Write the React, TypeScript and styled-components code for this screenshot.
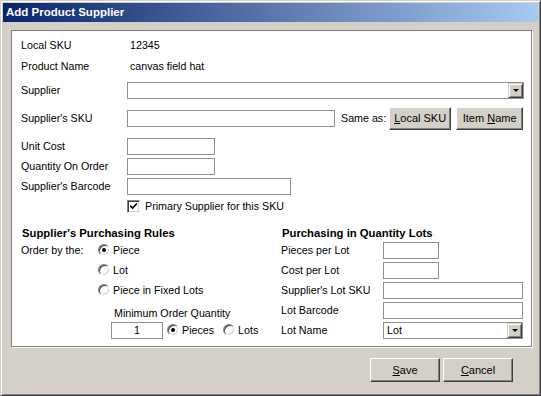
import styled, { createGlobalStyle } from "styled-components";

const GlobalStyle = createGlobalStyle`
  html, body {
    margin: 0;
    padding: 0;
    background: #d4d0c8;
  }
  body {
    font-family: "Liberation Sans", Arial, sans-serif;
    font-size: 10.7px;
    color: #000;
  }
`;

const Window = styled.div`
  width: 541px;
  height: 396px;
  box-sizing: border-box;
  background: #d4d0c8;
  border: 1px solid;
  border-color: #d4d0c8 #404040 #404040 #d4d0c8;
  box-shadow: inset 1px 1px #fff, inset -1px -1px #808080;
  padding: 2px;
  display: flex;
  flex-direction: column;
`;

const TitleBar = styled.div`
  height: 19px;
  flex: none;
  background: linear-gradient(to right, #0a246a, #a6caf0);
  color: #fff;
  font-weight: bold;
  font-size: 11.5px;
  line-height: 19px;
  padding-left: 3px;
`;

const Panel = styled.div`
  width: 521px;
  height: 317px;
  box-sizing: border-box;
  margin: 8px 0 0 8px;
  background: #fff;
  border: 1px solid #808080;
  box-shadow: 1px 1px 0 #fff;
  padding-left: 9px;
  display: flex;
  flex-direction: column;
`;

const Row = styled.div<{ $h?: number; $mt?: number }>`
  display: flex;
  align-items: center;
  height: ${(p) => p.$h ?? 20}px;
  margin-top: ${(p) => p.$mt ?? 0}px;
  white-space: nowrap;
`;

const Label = styled.span<{ $w?: number }>`
  flex: none;
  width: ${(p) => p.$w ?? 106}px;
`;

const Value = styled.span`
  padding-left: 3px;
`;

const TextBox = styled.input<{ $w: number; $center?: boolean }>`
  flex: none;
  width: ${(p) => p.$w}px;
  height: 17px;
  box-sizing: border-box;
  border: 1px solid #8f8f8f;
  margin: 0;
  padding: 0 3px;
  font: inherit;
  text-align: ${(p) => (p.$center ? "center" : "left")};
  background: #fff;
  outline: none;
`;

const SelectBox = styled.div<{ $w: number }>`
  flex: none;
  width: ${(p) => p.$w}px;
  height: 17px;
  box-sizing: border-box;
  border: 1px solid #8f8f8f;
  display: flex;
  align-items: center;
  justify-content: space-between;
  padding-left: 3px;
`;

const DropButton = styled.span`
  width: 15px;
  height: 15px;
  box-sizing: border-box;
  background: #d4d0c8;
  border: 1px solid;
  border-color: #d4d0c8 #404040 #404040 #d4d0c8;
  box-shadow: inset 1px 1px #fff, inset -1px -1px #808080;
  display: flex;
  align-items: center;
  justify-content: center;

  &::after {
    content: "";
    border-left: 3px solid transparent;
    border-right: 3px solid transparent;
    border-top: 3px solid #000;
  }
`;

const Button = styled.button<{ $w: number; $h?: number; $ml?: number }>`
  flex: none;
  width: ${(p) => p.$w}px;
  height: ${(p) => p.$h ?? 23}px;
  margin-left: ${(p) => p.$ml ?? 0}px;
  box-sizing: border-box;
  background: #d4d0c8;
  border: 1px solid;
  border-color: #fff #404040 #404040 #fff;
  box-shadow: inset -1px -1px #808080;
  font: inherit;
  font-size: 11px;
  color: #000;
  padding: 0;

  u {
    text-decoration: underline;
  }
`;

const SameAs = styled.span`
  margin-left: 6px;
`;

const Check = styled.span`
  flex: none;
  width: 13px;
  height: 13px;
  box-sizing: border-box;
  background: #fff;
  border: 1px solid;
  border-color: #808080 #fff #fff #808080;
  box-shadow: inset 1px 1px #404040, inset -1px -1px #d4d0c8;
  display: flex;
  align-items: center;
  justify-content: center;
`;

const CheckText = styled.span`
  margin-left: 5px;
`;

const Columns = styled.div`
  display: grid;
  grid-template-columns: 260px 1fr;
  margin-top: 10px;
`;

const Col = styled.div`
  display: flex;
  flex-direction: column;
`;

const Heading = styled.div`
  height: 14px;
  line-height: 14px;
  font-weight: bold;
  font-size: 11.3px;
  padding-left: 1px;
`;

const Indent = styled.span<{ $w: number }>`
  flex: none;
  width: ${(p) => p.$w}px;
`;

const RadioItem = styled.span<{ $ml?: number }>`
  display: inline-flex;
  align-items: center;
  gap: 3px;
  margin-left: ${(p) => p.$ml ?? 0}px;
`;

const RadioDot = styled.span<{ $on?: boolean }>`
  flex: none;
  width: 12px;
  height: 12px;
  box-sizing: border-box;
  border-radius: 50%;
  background: #fff;
  border: 1px solid;
  border-color: #808080 #fff #fff #808080;
  box-shadow: inset 1px 1px #404040, inset -1px -1px #d4d0c8;
  display: flex;
  align-items: center;
  justify-content: center;

  &::after {
    content: "";
    width: 4px;
    height: 4px;
    border-radius: 50%;
    background: ${(p) => (p.$on ? "#000" : "transparent")};
  }
`;

const Footer = styled.div`
  display: flex;
  justify-content: flex-end;
  gap: 3px;
  margin-top: 11px;
  padding-right: 25px;
`;

const Radio = ({ on, label, ml }: { on?: boolean; label: string; ml?: number }) => (
  <RadioItem $ml={ml}>
    <RadioDot $on={on} />
    {label}
  </RadioItem>
);

const Select = ({ w, value }: { w: number; value?: string }) => (
  <SelectBox $w={w}>
    <span>{value}</span>
    <DropButton />
  </SelectBox>
);

export default function App() {
  return (
    <>
      <GlobalStyle />
      <Window>
        <TitleBar>Add Product Supplier</TitleBar>
        <Panel>
          <Row $mt={4}>
            <Label>Local SKU</Label>
            <Value>12345</Value>
          </Row>
          <Row $mt={1}>
            <Label>Product Name</Label>
            <Value>canvas field hat</Value>
          </Row>
          <Row $mt={4}>
            <Label>Supplier</Label>
            <Select w={397} />
          </Row>
          <Row $h={24} $mt={6}>
            <Label>Supplier's SKU</Label>
            <TextBox $w={208} readOnly />
            <SameAs>Same as:</SameAs>
            <Button $w={62} $ml={3}>
              <u>L</u>ocal SKU
            </Button>
            <Button $w={67} $ml={5}>
              Item <u>N</u>ame
            </Button>
          </Row>
          <Row $mt={6}>
            <Label>Unit Cost</Label>
            <TextBox $w={88} readOnly />
          </Row>
          <Row>
            <Label>Quantity On Order</Label>
            <TextBox $w={88} readOnly />
          </Row>
          <Row>
            <Label>Supplier's Barcode</Label>
            <TextBox $w={164} readOnly />
          </Row>
          <Row>
            <Label />
            <Check>
              <svg width="7" height="7" viewBox="0 0 7 7">
                <path d="M0 2.5 L2.5 5 L7 0.5" stroke="#000" strokeWidth="1.6" fill="none" />
              </svg>
            </Check>
            <CheckText>Primary Supplier for this SKU</CheckText>
          </Row>

          <Columns>
            <Col>
              <Heading>Supplier's Purchasing Rules</Heading>
              <Row>
                <Label $w={77}>Order by the:</Label>
                <Radio on label="Piece" />
              </Row>
              <Row>
                <Indent $w={77} />
                <Radio label="Lot" />
              </Row>
              <Row>
                <Indent $w={77} />
                <Radio label="Piece in Fixed Lots" />
              </Row>
              <Row $h={14} $mt={6}>
                <Indent $w={93} />
                Minimum Order Quantity
              </Row>
              <Row>
                <Indent $w={90} />
                <TextBox $w={52} $center defaultValue="1" readOnly />
                <Radio on label="Pieces" ml={4} />
                <Radio label="Lots" ml={9} />
              </Row>
            </Col>
            <Col>
              <Heading>Purchasing in Quantity Lots</Heading>
              <Row>
                <Label $w={102}>Pieces per Lot</Label>
                <TextBox $w={56} readOnly />
              </Row>
              <Row>
                <Label $w={102}>Cost per Lot</Label>
                <TextBox $w={56} readOnly />
              </Row>
              <Row>
                <Label $w={102}>Supplier's Lot SKU</Label>
                <TextBox $w={140} readOnly />
              </Row>
              <Row>
                <Label $w={102}>Lot Barcode</Label>
                <TextBox $w={140} readOnly />
              </Row>
              <Row>
                <Label $w={102}>Lot Name</Label>
                <Select w={140} value="Lot" />
              </Row>
            </Col>
          </Columns>
        </Panel>
        <Footer>
          <Button $w={70} $h={24}>
            <u>S</u>ave
          </Button>
          <Button $w={70} $h={24}>
            <u>C</u>ancel
          </Button>
        </Footer>
      </Window>
    </>
  );
}
